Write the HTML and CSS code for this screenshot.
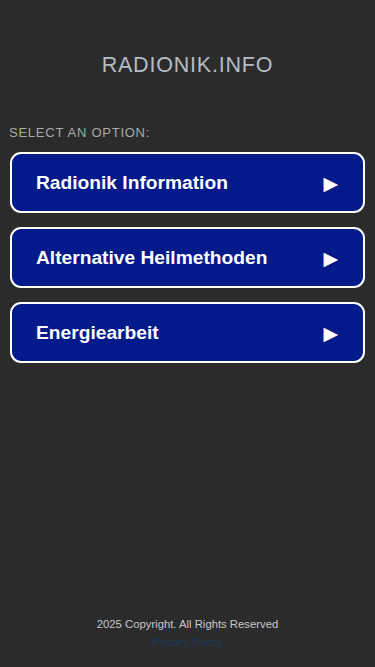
FILE: index.html
```html
<!DOCTYPE html>
<html lang="de">
<head>
<meta charset="utf-8">
<meta name="viewport" content="width=device-width, initial-scale=1">
<title>Radionik.info</title>
<link rel="stylesheet" href="styles.css">
</head>
<body>
<div class="page">
  <header class="header">
    <h1 class="title">RADIONIK.INFO</h1>
  </header>
  <main class="main">
    <p class="label">SELECT AN OPTION:</p>
    <nav class="options">
      <a class="option" href="#"><span>Radionik Information</span><span class="arrow">▶</span></a>
      <a class="option" href="#"><span>Alternative Heilmethoden</span><span class="arrow">▶</span></a>
      <a class="option" href="#"><span>Energiearbeit</span><span class="arrow">▶</span></a>
    </nav>
  </main>
  <footer class="footer">
    <p class="copy">2025 Copyright. All Rights Reserved</p>
    <a class="privacy" href="#">Privacy Policy</a>
  </footer>
</div>
</body>
</html>
```
FILE: styles.css
```css
* { box-sizing: border-box; }
html, body { margin: 0; padding: 0; }
body {
  background: #2b2b2b;
  font-family: "Liberation Sans", Arial, Helvetica, sans-serif;
}
.page {
  min-height: 667px;
  display: flex;
  flex-direction: column;
}
.header {
  padding-top: 52px;
  text-align: center;
}
.title {
  margin: 0;
  font-size: 21.5px;
  font-weight: normal;
  letter-spacing: 0.8px;
  color: #b4bcc4;
  line-height: 26px;
}
.main {
  padding: 0 10px;
  flex: 1;
}
.label {
  margin: 47px 0 0 -1px;
  font-size: 13px;
  letter-spacing: 0.75px;
  color: #a9a9a9;
  line-height: 16px;
}
.options {
  margin-top: 11px;
  display: flex;
  flex-direction: column;
  gap: 14px;
}
.option {
  display: flex;
  align-items: center;
  justify-content: space-between;
  height: 61px;
  padding: 0 25px 0 24px;
  background: #021a8a;
  border: 2.5px solid #ffffff;
  border-radius: 11px;
  color: #ffffff;
  text-decoration: none;
  font-size: 19.2px;
  font-weight: bold;
}
.arrow {
  font-size: 19px;
  font-family: "DejaVu Sans", sans-serif;
}
.footer {
  text-align: center;
  padding-bottom: 18px;
}
.copy {
  margin: 0;
  font-size: 11.3px;
  color: #c8c8c8;
  line-height: 14px;
}
.privacy {
  display: block;
  margin-top: 4px;
  font-size: 11.3px;
  color: #1f3a58;
  text-decoration: none;
  line-height: 14px;
}
```
